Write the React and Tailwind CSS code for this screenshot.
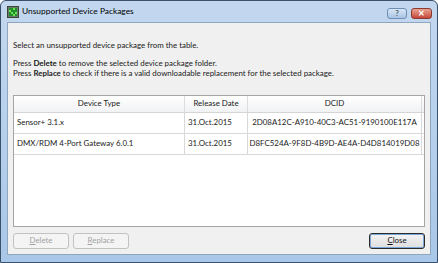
const rows = [
  { type: "Sensor+ 3.1.x", date: "31.Oct.2015", dcid: "2D08A12C-A910-40C3-AC51-9190100E117A" },
  { type: "DMX/RDM 4-Port Gateway 6.0.1", date: "31.Oct.2015", dcid: "D8FC524A-9F8D-4B9D-AE4A-D4D814019D08" },
];

function AppIcon() {
  return (
    <svg width="12" height="12" viewBox="0 0 12 12">
      <rect x="0.5" y="0.5" width="11" height="11" fill="#6b7a6b" stroke="#3a463a" />
      <rect x="2" y="2" width="8" height="8" fill="#1f8f2a" />
      <path d="M2 4h2v2H2zM6 2h2v2H6zM4 6h2v2H4zM8 6h2v2H8zM6 8h2v2H6z" fill="#6ee05a" />
    </svg>
  );
}

export default function App() {
  const font = { fontFamily: 'Lato, "Liberation Sans", sans-serif' };
  return (
    <div
      className="w-[438px] h-[263px] flex flex-col bg-gradient-to-b from-[#c3d8ef] to-[#a9c7e8] border border-[#39516b] rounded-t-[6px] text-[#1a1a1a]"
      style={font}
    >
      {/* title bar */}
      <div className="h-[21px] shrink-0 flex items-center pl-[6px] pr-[5px]">
        <AppIcon />
        <span className="ml-[3px] text-[8.4px] text-black">Unsupported Device Packages</span>
        <div className="ml-auto flex gap-[4px] mt-[3px]">
          <div className="w-[20px] h-[11px] rounded-[3px] border border-[#6e8fb4] bg-gradient-to-b from-[#d9e7f6] to-[#a9c3e3] flex items-center justify-center text-[8px] font-bold text-[#4d5f75] leading-none">
            ?
          </div>
          <div className="w-[21px] h-[11px] rounded-[3px] border border-[#8b3a32] bg-gradient-to-b from-[#e9a392] to-[#c5473a] flex items-center justify-center text-[8px] font-bold text-white leading-none">
            ✕
          </div>
        </div>
      </div>

      {/* client */}
      <div className="flex-1 mx-[6px] mb-[7px] bg-[#f0f0f0] border border-[#8fa6bf] flex flex-col px-[5px] text-[7.9px] whitespace-nowrap">
        <div className="mt-[18px] leading-[8px]">Select an unsupported device package from the table.</div>
        <div className="mt-[9px] leading-[10px]">
          Press <b>Delete</b> to remove the selected device package folder.
        </div>
        <div className="leading-[10px]">
          Press <b>Replace</b> to check if there is a valid downloadable replacement for the selected package.
        </div>

        {/* table */}
        <div className="mt-[17px] h-[132px] bg-white border border-[#a5a5a5] flex flex-col">
          <div className="h-[17px] shrink-0 flex bg-gradient-to-b from-white to-[#f1f2f4] border-b border-[#d5d5d5]">
            <div className="w-[171px] shrink-0 flex items-center justify-center border-r border-[#dcdcdc]">Device Type</div>
            <div className="w-[63px] shrink-0 flex items-center justify-center border-r border-[#dcdcdc]">Release Date</div>
            <div className="flex-1 flex items-center justify-center border-r border-[#dcdcdc] mr-[2px]">DCID</div>
          </div>
          {rows.map((r) => (
            <div key={r.dcid} className="h-[21px] shrink-0 flex border-b border-[#d8d8d8]">
              <div className="w-[171px] shrink-0 flex items-center pl-[3px] border-r border-[#d8d8d8]">{r.type}</div>
              <div className="w-[63px] shrink-0 flex items-center pl-[3px] border-r border-[#d8d8d8]">{r.date}</div>
              <div className="flex-1 flex items-center justify-center border-r border-[#d8d8d8] mr-[2px]">{r.dcid}</div>
            </div>
          ))}
        </div>

        {/* buttons */}
        <div className="mt-[6px] flex gap-[4px]">
          <button className="w-[56px] h-[16px] rounded-[3px] border border-[#c2c2c2] bg-[#f4f4f4] text-[#a3a3a3] leading-none">
            <u>D</u>elete
          </button>
          <button className="w-[56px] h-[16px] rounded-[3px] border border-[#c2c2c2] bg-[#f4f4f4] text-[#a3a3a3] leading-none">
            <u>R</u>eplace
          </button>
          <button className="ml-auto w-[56px] h-[16px] rounded-[3px] border border-[#2b2b2b] bg-gradient-to-b from-[#f4f4f4] to-[#dedede] text-[#111] leading-none shadow-[inset_0_0_0_1px_#7aa7d8]">
            <u>C</u>lose
          </button>
        </div>
      </div>
    </div>
  );
}
